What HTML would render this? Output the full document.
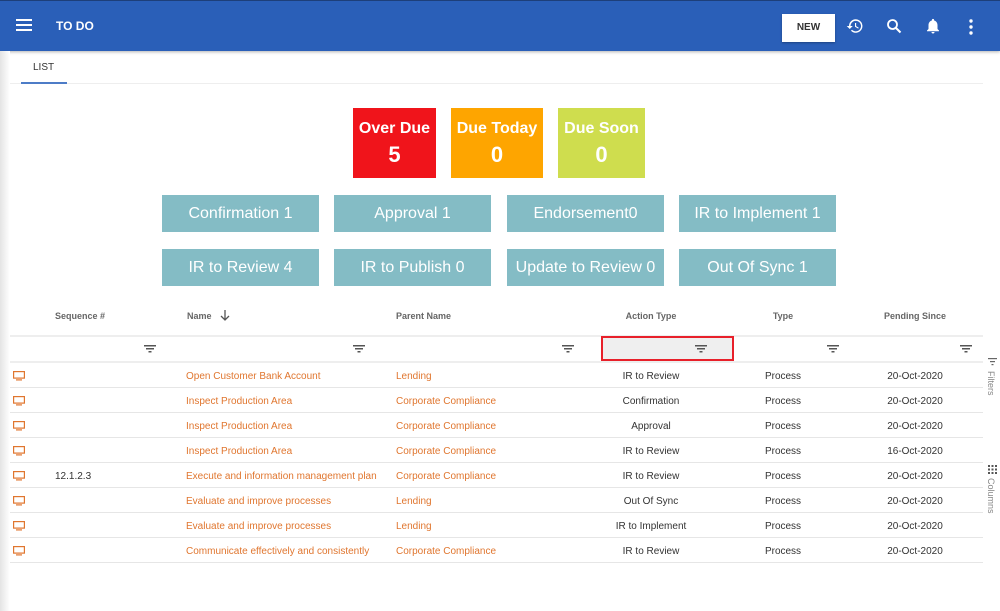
<!DOCTYPE html>
<html><head><style>
*{margin:0;padding:0;box-sizing:border-box}
body{width:1000px;height:611px;background:#fff;font-family:"Liberation Sans",sans-serif;position:relative;overflow:hidden}
.hdr{position:absolute;left:0;top:0;width:1000px;height:51px;background:#2a5fb8;border-top:1px solid #1d3f7a;box-shadow:0 1px 3px rgba(0,0,0,.3)}
.shadow{position:absolute;left:0;top:51px;width:10px;height:560px;background:linear-gradient(to right,#e4e4e4,#fff)}
.abs{position:absolute}
.card{position:absolute;color:#fff;font-weight:bold;text-align:center;font-size:16px}
.card b{display:block;font-size:22px;margin-top:4px}
.btn{position:absolute;width:157px;height:37px;background:#84bcc5;color:#fff;font-size:16px;text-align:center;line-height:37px}
.th{position:absolute;top:311px;font-size:9px;color:#666;font-weight:bold;line-height:10px}
.line{position:absolute;left:10px;width:973px;height:1px;background:#e6e6e6}
.row{position:absolute;left:10px;width:973px;height:25px;font-size:10px;color:#333}
.row span{position:absolute;top:8px}
.o{color:#e0762f}
.c{transform:translateX(-50%)}
</style></head><body>
<div class="hdr">
<svg class="abs" style="left:16px;top:17px" width="16" height="14"><rect y="1" width="16" height="2" fill="#fff"/><rect y="6" width="16" height="2" fill="#fff"/><rect y="11" width="16" height="2" fill="#fff"/></svg>
<div class="abs" style="left:56px;top:18px;color:#fff;font-weight:bold;font-size:12px">TO DO</div>
<div class="abs" style="left:782px;top:13px;width:53px;height:28px;background:#fff;color:#333;font-size:10px;font-weight:bold;text-align:center;line-height:28px;box-shadow:0 1px 2px rgba(0,0,0,.3)">NEW</div>
<svg class="abs" style="left:846px;top:16px" width="18" height="18" viewBox="0 0 24 24"><path d="M13 3a9 9 0 0 0-9 9H1l4 4 4-4H6a7 7 0 1 1 2 5l-1.4 1.4A9 9 0 1 0 13 3zm-1 5v5l4.3 2.5.7-1.2-3.5-2.1V8z" fill="#fff"/></svg>
<svg class="abs" style="left:886px;top:17px" width="16" height="16" viewBox="0 0 16 16"><circle cx="6.5" cy="6.5" r="4.5" fill="none" stroke="#fff" stroke-width="1.8"/><path d="M10 10l4.5 4.5" stroke="#fff" stroke-width="2"/></svg>
<svg class="abs" style="left:924px;top:15px" width="18" height="20" viewBox="0 0 24 24"><path d="M12 22a2 2 0 0 0 2-2h-4a2 2 0 0 0 2 2zm6-6v-5c0-3-1.6-5.6-4.5-6.3V4a1.5 1.5 0 0 0-3 0v.7C7.6 5.4 6 8 6 11v5l-2 2v1h16v-1z" fill="#fff"/></svg>
<svg class="abs" style="left:968px;top:17px" width="6" height="18"><circle cx="3" cy="3" r="1.7" fill="#fff"/><circle cx="3" cy="9" r="1.7" fill="#fff"/><circle cx="3" cy="15" r="1.7" fill="#fff"/></svg>
</div>
<div class="shadow"></div>
<div class="abs" style="left:33px;top:62px;font-size:10px;color:#333">LIST</div>
<div class="abs" style="left:10px;top:83px;width:973px;height:1px;background:#eee"></div>
<div class="abs" style="left:21px;top:82px;width:46px;height:2px;background:#4d7cc7"></div>

<div class="card" style="left:353px;top:108px;width:83px;height:70px;background:#f0141b;padding-top:12px">Over Due<b>5</b></div>
<div class="card" style="left:451px;top:108px;width:92px;height:70px;background:#fea500;padding-top:12px">Due Today<b>0</b></div>
<div class="card" style="left:558px;top:108px;width:87px;height:70px;background:#cfdd4e;padding-top:12px">Due Soon<b>0</b></div>

<div class="btn" style="left:162px;top:195px">Confirmation 1</div>
<div class="btn" style="left:334px;top:195px">Approval 1</div>
<div class="btn" style="left:507px;top:195px">Endorsement0</div>
<div class="btn" style="left:679px;top:195px">IR to Implement 1</div>
<div class="btn" style="left:162px;top:249px">IR to Review 4</div>
<div class="btn" style="left:334px;top:249px">IR to Publish 0</div>
<div class="btn" style="left:507px;top:249px">Update to Review 0</div>
<div class="btn" style="left:679px;top:249px">Out Of Sync 1</div>

<div class="th" style="left:55px">Sequence #</div>
<div class="th" style="left:187px">Name</div>
<svg class="abs" style="left:220px;top:309px" width="10" height="12"><path d="M5 1v10M1 7l4 4 4-4" fill="none" stroke="#555" stroke-width="1.3"/></svg>
<div class="th" style="left:396px">Parent Name</div>
<div class="th c" style="left:651px">Action Type</div>
<div class="th c" style="left:783px">Type</div>
<div class="th c" style="left:915px">Pending Since</div>
<div class="line" style="top:335px;height:2px;background:#eee"></div>
<div class="abs" style="left:601px;top:336px;width:133px;height:25px;background:#efefef;border:2px solid #e8202a"></div>
<svg class="abs" style="left:0;top:344px" width="1000" height="10">
<g fill="#555">
<rect x="144" y="1" width="12" height="1.5"/><rect x="146" y="4" width="8" height="1.5"/><rect x="148.5" y="7" width="3" height="1.5"/>
<rect x="353" y="1" width="12" height="1.5"/><rect x="355" y="4" width="8" height="1.5"/><rect x="357.5" y="7" width="3" height="1.5"/>
<rect x="562" y="1" width="12" height="1.5"/><rect x="564" y="4" width="8" height="1.5"/><rect x="566.5" y="7" width="3" height="1.5"/>
<rect x="695" y="1" width="12" height="1.5"/><rect x="697" y="4" width="8" height="1.5"/><rect x="699.5" y="7" width="3" height="1.5"/>
<rect x="827" y="1" width="12" height="1.5"/><rect x="829" y="4" width="8" height="1.5"/><rect x="831.5" y="7" width="3" height="1.5"/>
<rect x="960" y="1" width="12" height="1.5"/><rect x="962" y="4" width="8" height="1.5"/><rect x="964.5" y="7" width="3" height="1.5"/>
</g></svg>
<div class="line" style="top:361px;height:2px;background:#eee"></div>

<div class="row" style="top:363px"><svg class="abs" style="left:3px;top:8px" width="12" height="10"><rect x="0.6" y="0.6" width="10.8" height="6.5" fill="none" stroke="#e0762f" stroke-width="1.2"/><rect x="3" y="8.3" width="6" height="1.2" fill="#e0762f"/></svg><span class="o" style="left:176px">Open Customer Bank Account</span><span class="o" style="left:386px">Lending</span><span class="c" style="left:641px">IR to Review</span><span class="c" style="left:773px">Process</span><span class="c" style="left:905px">20-Oct-2020</span></div>
<div class="line" style="top:387px"></div>
<div class="row" style="top:388px"><svg class="abs" style="left:3px;top:8px" width="12" height="10"><rect x="0.6" y="0.6" width="10.8" height="6.5" fill="none" stroke="#e0762f" stroke-width="1.2"/><rect x="3" y="8.3" width="6" height="1.2" fill="#e0762f"/></svg><span class="o" style="left:176px">Inspect Production Area</span><span class="o" style="left:386px">Corporate Compliance</span><span class="c" style="left:641px">Confirmation</span><span class="c" style="left:773px">Process</span><span class="c" style="left:905px">20-Oct-2020</span></div>
<div class="line" style="top:412px"></div>
<div class="row" style="top:413px"><svg class="abs" style="left:3px;top:8px" width="12" height="10"><rect x="0.6" y="0.6" width="10.8" height="6.5" fill="none" stroke="#e0762f" stroke-width="1.2"/><rect x="3" y="8.3" width="6" height="1.2" fill="#e0762f"/></svg><span class="o" style="left:176px">Inspect Production Area</span><span class="o" style="left:386px">Corporate Compliance</span><span class="c" style="left:641px">Approval</span><span class="c" style="left:773px">Process</span><span class="c" style="left:905px">20-Oct-2020</span></div>
<div class="line" style="top:437px"></div>
<div class="row" style="top:438px"><svg class="abs" style="left:3px;top:8px" width="12" height="10"><rect x="0.6" y="0.6" width="10.8" height="6.5" fill="none" stroke="#e0762f" stroke-width="1.2"/><rect x="3" y="8.3" width="6" height="1.2" fill="#e0762f"/></svg><span class="o" style="left:176px">Inspect Production Area</span><span class="o" style="left:386px">Corporate Compliance</span><span class="c" style="left:641px">IR to Review</span><span class="c" style="left:773px">Process</span><span class="c" style="left:905px">16-Oct-2020</span></div>
<div class="line" style="top:462px"></div>
<div class="row" style="top:463px"><svg class="abs" style="left:3px;top:8px" width="12" height="10"><rect x="0.6" y="0.6" width="10.8" height="6.5" fill="none" stroke="#e0762f" stroke-width="1.2"/><rect x="3" y="8.3" width="6" height="1.2" fill="#e0762f"/></svg><span style="left:45px">12.1.2.3</span><span class="o" style="left:176px">Execute and information management plan</span><span class="o" style="left:386px">Corporate Compliance</span><span class="c" style="left:641px">IR to Review</span><span class="c" style="left:773px">Process</span><span class="c" style="left:905px">20-Oct-2020</span></div>
<div class="line" style="top:487px"></div>
<div class="row" style="top:488px"><svg class="abs" style="left:3px;top:8px" width="12" height="10"><rect x="0.6" y="0.6" width="10.8" height="6.5" fill="none" stroke="#e0762f" stroke-width="1.2"/><rect x="3" y="8.3" width="6" height="1.2" fill="#e0762f"/></svg><span class="o" style="left:176px">Evaluate and improve processes</span><span class="o" style="left:386px">Lending</span><span class="c" style="left:641px">Out Of Sync</span><span class="c" style="left:773px">Process</span><span class="c" style="left:905px">20-Oct-2020</span></div>
<div class="line" style="top:512px"></div>
<div class="row" style="top:513px"><svg class="abs" style="left:3px;top:8px" width="12" height="10"><rect x="0.6" y="0.6" width="10.8" height="6.5" fill="none" stroke="#e0762f" stroke-width="1.2"/><rect x="3" y="8.3" width="6" height="1.2" fill="#e0762f"/></svg><span class="o" style="left:176px">Evaluate and improve processes</span><span class="o" style="left:386px">Lending</span><span class="c" style="left:641px">IR to Implement</span><span class="c" style="left:773px">Process</span><span class="c" style="left:905px">20-Oct-2020</span></div>
<div class="line" style="top:537px"></div>
<div class="row" style="top:538px"><svg class="abs" style="left:3px;top:8px" width="12" height="10"><rect x="0.6" y="0.6" width="10.8" height="6.5" fill="none" stroke="#e0762f" stroke-width="1.2"/><rect x="3" y="8.3" width="6" height="1.2" fill="#e0762f"/></svg><span class="o" style="left:176px">Communicate effectively and consistently</span><span class="o" style="left:386px">Corporate Compliance</span><span class="c" style="left:641px">IR to Review</span><span class="c" style="left:773px">Process</span><span class="c" style="left:905px">20-Oct-2020</span></div>
<div class="line" style="top:562px"></div>

<svg class="abs" style="left:988px;top:358px" width="10" height="8"><rect x="0" y="0" width="9" height="1.2" fill="#666"/><rect x="2" y="3" width="5" height="1.2" fill="#666"/><rect x="3.5" y="6" width="2" height="1.2" fill="#666"/></svg>
<div class="abs" style="left:986px;top:371px;font-size:9px;color:#888;writing-mode:vertical-rl">Filters</div>
<svg class="abs" style="left:988px;top:465px" width="9" height="9" fill="#555"><rect x="0" y="0" width="2" height="2"/><rect x="3.5" y="0" width="2" height="2"/><rect x="7" y="0" width="2" height="2"/><rect x="0" y="3.5" width="2" height="2"/><rect x="3.5" y="3.5" width="2" height="2"/><rect x="7" y="3.5" width="2" height="2"/><rect x="0" y="7" width="2" height="2"/><rect x="3.5" y="7" width="2" height="2"/><rect x="7" y="7" width="2" height="2"/></svg>
<div class="abs" style="left:986px;top:478px;font-size:9px;color:#888;writing-mode:vertical-rl">Columns</div>
</body></html>
